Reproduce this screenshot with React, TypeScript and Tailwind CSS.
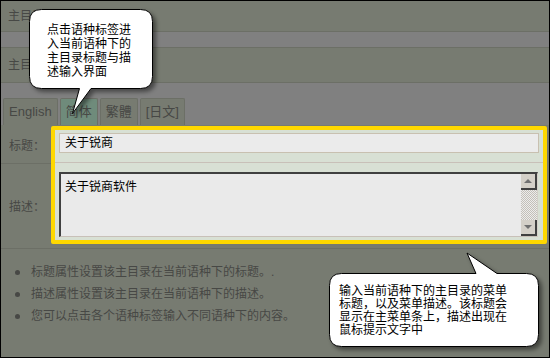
import React from "react";

const font = { fontFamily: '"Liberation Sans", "Noto Sans CJK SC", sans-serif' };

const tabs = ["English", "简体", "繁體", "[日文]"];

const bullets = [
  "标题属性设置该主目录在当前语种下的标题。.",
  "描述属性设置该主目录在当前语种下的描述。",
  "您可以点击各个语种标签输入不同语种下的内容。",
];

export default function App() {
  return (
    <div
      className="relative h-[358px] w-[550px] overflow-hidden border border-black bg-[#777b71] text-[12px] text-[#474845]"
      style={font}
    >
      {/* top strips (mostly hidden by the first callout) */}
      <div className="flex h-[31px] items-center border-b border-[#6c6f66] px-[7px]">主目录</div>
      <div className="h-[15px] bg-[#808080]" />
      <div className="flex h-[36px] items-center border-y border-[#6c6f66] px-[7px]">主目录</div>

      {/* language tabs */}
      <div className="flex h-[42px] items-end gap-[2px] bg-[#808080] pl-[2px]">
        {tabs.map((t) => (
          <div
            key={t}
            className={`flex h-[27px] items-center rounded-t-[2px] border border-b-0 border-[#6c6f66] px-[5px] text-[13px] ${
              t === "简体" ? "bg-[#6f8b7b]" : "bg-[#777b71]"
            }`}
          >
            {t}
          </div>
        ))}
      </div>

      {/* form */}
      <div className="flex h-[124px] border-b border-[#6c6f66]">
        <div className="flex w-[50px] flex-col">
          <div className="flex h-[39px] items-center border-b border-[#6c6f66] pl-[8px] pt-[3px]">标题：</div>
          <div className="flex flex-1 items-center pl-[8px] pt-[2px]">描述：</div>
        </div>
        <div className="mt-[1px] h-[118px] w-[496px] rounded-[2px] border-[4px] border-[#ffd800] bg-[#d8e0d4] px-[4px] pt-[3px]">
          <div className="flex h-[20px] items-center border border-[#c8c0b0] bg-[#ebebeb] pl-[5px] text-black">关于锐商</div>
          <div className="mx-[-4px] mt-[9px] border-t border-[#c8c0b8]" />
          <div className="mt-[9px] flex h-[65px] w-[479px] border-l-2 border-t-2 border-r border-b border-l-[#404040] border-t-[#404040] border-r-[#d4d0c8] border-b-[#c8c0b8] bg-[#eaeaea]">
            <div className="flex-1 pl-[4px] pt-[4px] text-black">关于锐商软件</div>
            <div className="flex w-[16px] flex-col">
              <div className="flex h-[16px] items-center justify-center border-r-2 border-b-2 border-[#404040] bg-[#d4d0c8]">
                <div className="h-0 w-0 border-x-[4px] border-b-[4px] border-x-transparent border-b-[#707070]" />
              </div>
              <div className="flex-1 bg-[repeating-conic-gradient(#c4c0b8_0_25%,#ececec_0_50%)] bg-[length:2px_2px]" />
              <div className="flex h-[16px] items-center justify-center border-r-2 border-b-2 border-[#404040] bg-[#d4d0c8]">
                <div className="h-0 w-0 border-x-[4px] border-t-[4px] border-x-transparent border-t-[#707070]" />
              </div>
            </div>
          </div>
        </div>
      </div>

      {/* bullet notes */}
      <ul className="flex flex-col gap-[6px] pl-[30px] pt-[15px]">
        {bullets.map((b) => (
          <li key={b} className="relative h-[16px] leading-[16px]">
            <span className="absolute left-[-16px] top-[6px] h-[5px] w-[5px] rounded-full bg-[#474845]" />
            {b}
          </li>
        ))}
      </ul>

      {/* callout 1 */}
      <svg
        className="absolute left-[26px] top-[6px] drop-shadow-[3px_3px_2px_rgba(0,0,0,0.45)]"
        width="134"
        height="112"
        viewBox="26 6 134 112"
      >
        <path
          d="M40.5 8.5 H139.5 Q151.5 8.5 151.5 20.5 V75.5 Q151.5 87.5 139.5 87.5 H90 L71.5 112.5 L78.5 87.5 H40.5 Q28.5 87.5 28.5 75.5 V20.5 Q28.5 8.5 40.5 8.5 Z"
          fill="#ffffff"
          stroke="#000000"
          strokeWidth="1"
        />
      </svg>
      <div className="absolute left-[46px] top-[22px] w-[90px] text-[12px] leading-[14px] text-black">
        点击语种标签进
        <br />
        入当前语种下的
        <br />
        主目录标题与描
        <br />
        述输入界面
      </div>

      {/* callout 2 */}
      <svg
        className="absolute left-[326px] top-[250px] drop-shadow-[3px_3px_2px_rgba(0,0,0,0.45)]"
        width="218"
        height="102"
        viewBox="326 250 218 102"
      >
        <path
          d="M340.5 272.5 H475 L466 252 L496 272.5 H525.5 Q537.5 272.5 537.5 284.5 V333.5 Q537.5 345.5 525.5 345.5 H340.5 Q328.5 345.5 328.5 333.5 V284.5 Q328.5 272.5 340.5 272.5 Z"
          fill="#ffffff"
          stroke="#000000"
          strokeWidth="1"
        />
      </svg>
      <div className="absolute left-[338px] top-[284px] w-[180px] text-[12px] leading-[13px] text-black">
        输入当前语种下的主目录的菜单
        <br />
        标题，以及菜单描述。该标题会
        <br />
        显示在主菜单条上，描述出现在
        <br />
        鼠标提示文字中
      </div>
    </div>
  );
}
